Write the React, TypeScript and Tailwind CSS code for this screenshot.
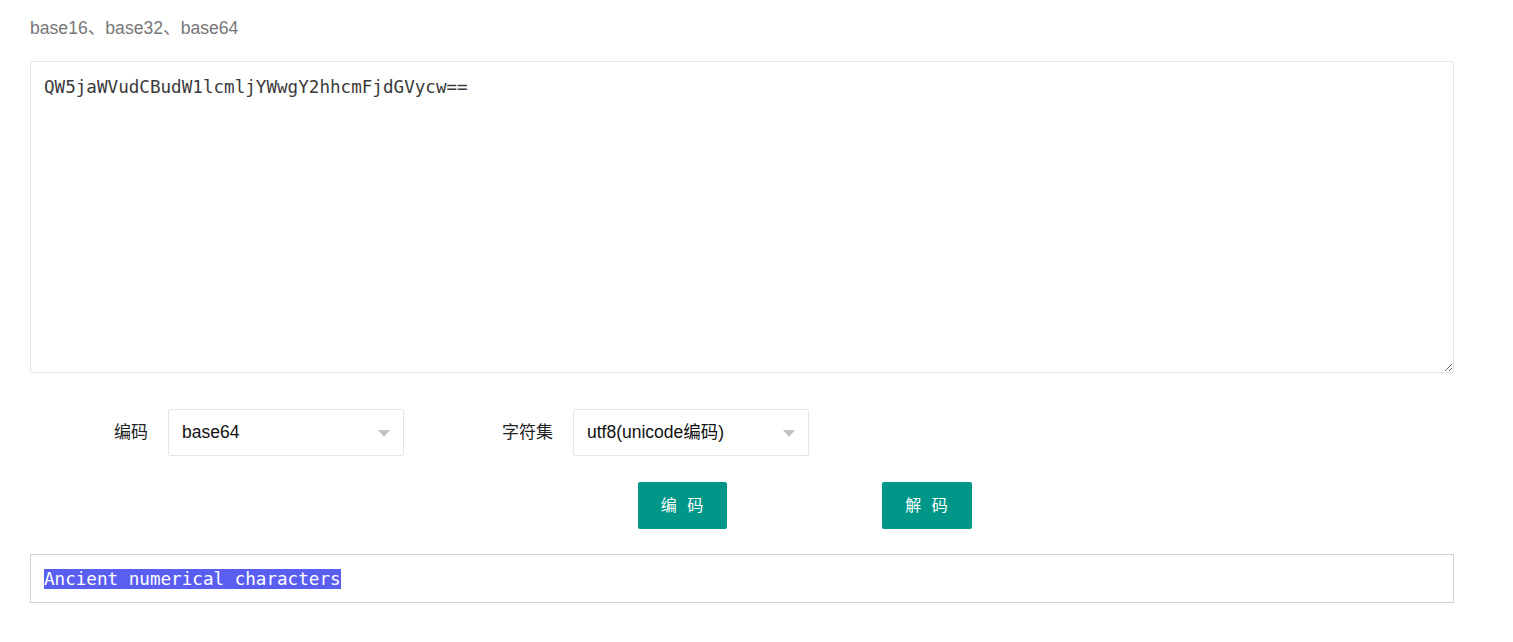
import React from 'react'

const cjk = '"Liberation Sans", "Noto Sans CJK SC", sans-serif'

function FakeSelect({ value }: { value: string }) {
  return (
    <div className="relative flex h-[47px] w-[236px] items-center rounded-[2px] border border-[#e6e6e6] bg-white pl-[13px] text-[17.5px] text-[#111]">
      <span>{value}</span>
      <span className="absolute right-[13px] top-[20px] h-0 w-0 border-x-[6px] border-t-[7px] border-x-transparent border-t-[#c2c2c2]" />
    </div>
  )
}

export default function App() {
  return (
    <div className="min-h-[642px] bg-white px-[30px] pt-[16px]" style={{ fontFamily: cjk }}>
      <p className="h-[24px] text-[17.6px] leading-[24px] text-[#777]">base16、base32、base64</p>

      <textarea
        readOnly
        defaultValue="QW5jaWVudCBudW1lcmljYWwgY2hhcmFjdGVycw=="
        className="mt-[21px] block h-[312px] w-[1424px] rounded-[2px] border border-[#e6e6e6] px-[13px] py-[12px] text-[17.6px] leading-[26px] text-[#3a3a3a] outline-none"
        style={{ fontFamily: '"DejaVu Sans Mono", monospace' }}
      />

      <div className="mt-[36px] flex items-center">
        <label className="w-[118px] text-right text-[17px] text-[#222]">编码</label>
        <div className="ml-[20px]">
          <FakeSelect value="base64" />
        </div>
        <label className="ml-[31px] w-[118px] text-right text-[17px] text-[#222]">字符集</label>
        <div className="ml-[20px]">
          <FakeSelect value="utf8(unicode编码)" />
        </div>
      </div>

      <div className="mt-[26px] flex pl-[608px]">
        <button
          type="button"
          className="h-[47px] w-[89px] rounded-[2px] bg-[#009688] pl-[2px] text-[16px] tracking-[3px] text-white"
        >
          编 码
        </button>
        <button
          type="button"
          className="ml-[155px] h-[47px] w-[90px] rounded-[2px] bg-[#009688] pl-[2px] text-[16px] tracking-[3px] text-white"
        >
          解 码
        </button>
      </div>

      <div
        className="mt-[25px] flex h-[49px] w-[1424px] items-center border border-[#d2d2d2] px-[13px] text-[17.6px] text-white"
        style={{ fontFamily: '"DejaVu Sans Mono", monospace' }}
      >
        <span className="bg-[#5a5ef0] leading-[20px]">Ancient numerical characters</span>
      </div>
    </div>
  )
}
